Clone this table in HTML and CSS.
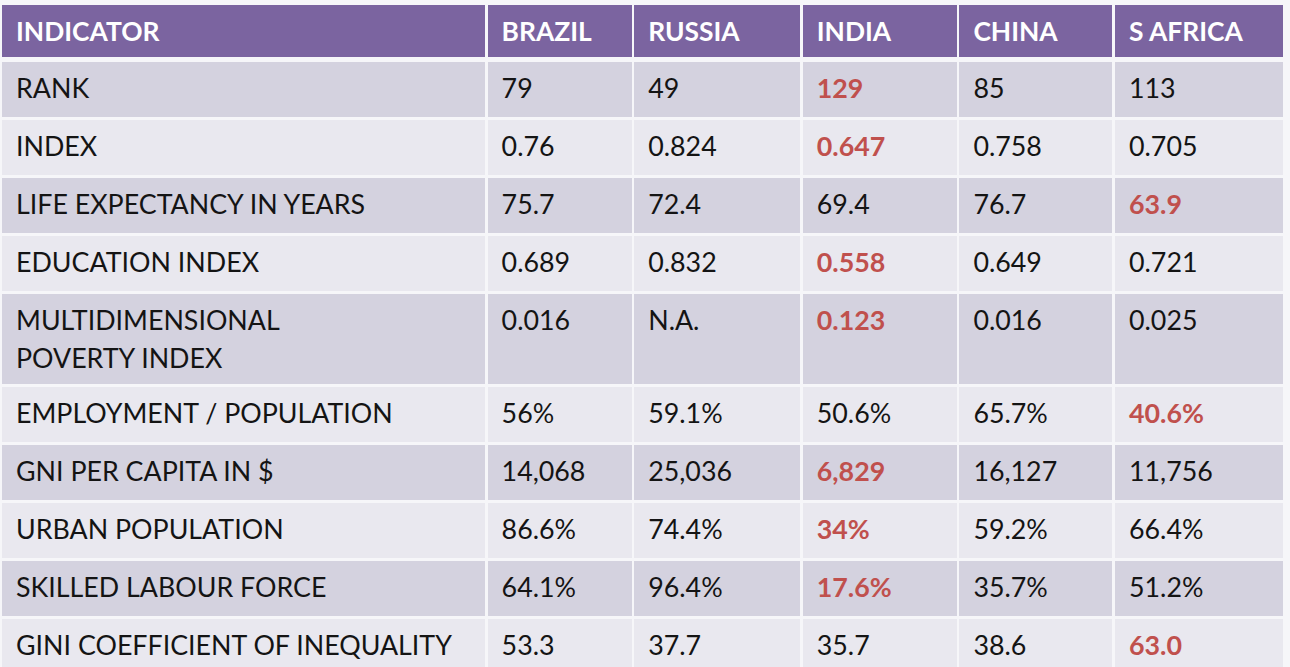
FILE: index.html
```html
<!DOCTYPE html>
<html lang="en">
<head>
<meta charset="utf-8">
<title>Indicators</title>
<link rel="stylesheet" href="styles.css">
</head>
<body>
<div class="table">
  <div class="cell head">INDICATOR</div>
  <div class="cell head">BRAZIL</div>
  <div class="cell head">RUSSIA</div>
  <div class="cell head">INDIA</div>
  <div class="cell head">CHINA</div>
  <div class="cell head">S AFRICA</div>

  <div class="cell dark">RANK</div>
  <div class="cell dark">79</div>
  <div class="cell dark">49</div>
  <div class="cell dark hi">129</div>
  <div class="cell dark">85</div>
  <div class="cell dark">113</div>

  <div class="cell light">INDEX</div>
  <div class="cell light">0.76</div>
  <div class="cell light">0.824</div>
  <div class="cell light hi">0.647</div>
  <div class="cell light">0.758</div>
  <div class="cell light">0.705</div>

  <div class="cell dark">LIFE EXPECTANCY IN YEARS</div>
  <div class="cell dark">75.7</div>
  <div class="cell dark">72.4</div>
  <div class="cell dark">69.4</div>
  <div class="cell dark">76.7</div>
  <div class="cell dark hi">63.9</div>

  <div class="cell light">EDUCATION INDEX</div>
  <div class="cell light">0.689</div>
  <div class="cell light">0.832</div>
  <div class="cell light hi">0.558</div>
  <div class="cell light">0.649</div>
  <div class="cell light">0.721</div>

  <div class="cell dark">MULTIDIMENSIONAL<br>POVERTY INDEX</div>
  <div class="cell dark">0.016</div>
  <div class="cell dark">N.A.</div>
  <div class="cell dark hi">0.123</div>
  <div class="cell dark">0.016</div>
  <div class="cell dark">0.025</div>

  <div class="cell light">EMPLOYMENT / POPULATION</div>
  <div class="cell light">56%</div>
  <div class="cell light">59.1%</div>
  <div class="cell light">50.6%</div>
  <div class="cell light">65.7%</div>
  <div class="cell light hi">40.6%</div>

  <div class="cell dark">GNI PER CAPITA IN $</div>
  <div class="cell dark">14,068</div>
  <div class="cell dark">25,036</div>
  <div class="cell dark hi">6,829</div>
  <div class="cell dark">16,127</div>
  <div class="cell dark">11,756</div>

  <div class="cell light">URBAN POPULATION</div>
  <div class="cell light">86.6%</div>
  <div class="cell light">74.4%</div>
  <div class="cell light hi">34%</div>
  <div class="cell light">59.2%</div>
  <div class="cell light">66.4%</div>

  <div class="cell dark">SKILLED LABOUR FORCE</div>
  <div class="cell dark">64.1%</div>
  <div class="cell dark">96.4%</div>
  <div class="cell dark hi">17.6%</div>
  <div class="cell dark">35.7%</div>
  <div class="cell dark">51.2%</div>

  <div class="cell light">GINI COEFFICIENT OF INEQUALITY</div>
  <div class="cell light">53.3</div>
  <div class="cell light">37.7</div>
  <div class="cell light">35.7</div>
  <div class="cell light">38.6</div>
  <div class="cell light hi">63.0</div>
</div>
</body>
</html>
```
FILE: styles.css
```css
html, body {
  margin: 0;
  padding: 0;
  overflow: hidden;
  background: #f6f6f9;
}

body {
  font-family: Lato, "Open Sans", sans-serif;
  font-size: 26.8px;
  line-height: 38px;
  color: #141414;
}

.table {
  display: grid;
  grid-template-columns: 483px 144px 166px 154px 153px 168px;
  grid-template-rows: 54px repeat(4, 55px) 90px repeat(5, 55px);
  column-gap: 2.6px;
  row-gap: 3px;
  padding: 5px 0 0 2px;
}

.cell {
  padding: 7px 8px 0 14px;
  box-sizing: border-box;
  white-space: nowrap;
}

.head {
  background: #7b64a0;
  color: #fff;
  font-size: 26.4px;
  font-weight: 700;
  margin-bottom: 2px;
}

.dark {
  background: #d4d2df;
}

.light {
  background: #e9e8ef;
}

.hi {
  color: #c0504d;
  font-weight: 700;
}
```
